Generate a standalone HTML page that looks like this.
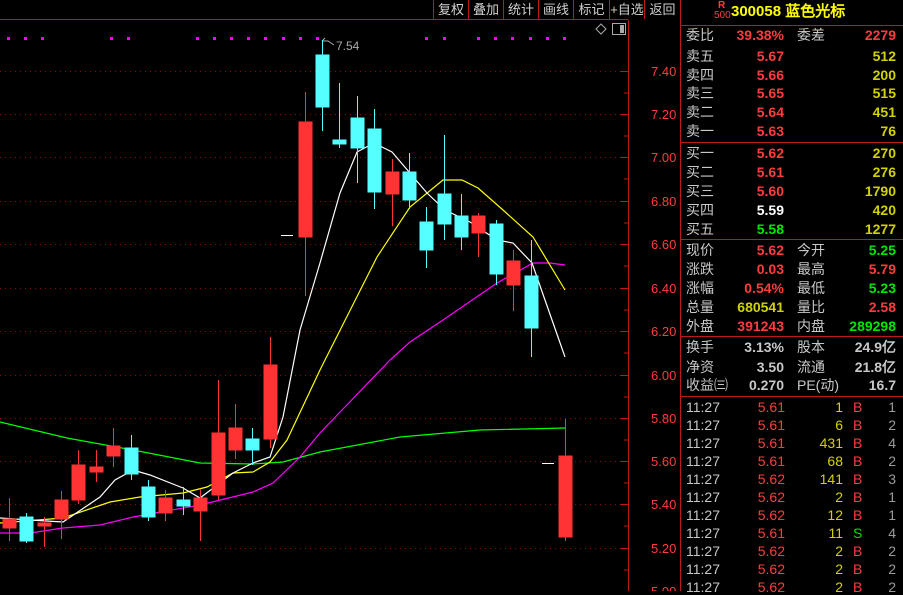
<!DOCTYPE html>
<html><head><meta charset="utf-8"><style>
body{margin:0;background:#000;width:903px;height:591px;overflow:hidden;position:relative;font-family:"Liberation Sans","WenQuanYi Zen Hei","Noto Sans CJK SC",sans-serif;}
.t{position:absolute;font-size:14px;line-height:16px;white-space:nowrap;}
.g{color:#c8c8c8}.r{color:#ff3c3c}.y{color:#d2d200}.gr{color:#00e600}.w{color:#fff}.gy{color:#9a9a9a}
.n{font-weight:bold;font-family:"Liberation Sans",sans-serif;}
.btn{position:absolute;top:1px;font-size:13px;color:#d0d0d0;line-height:17px;text-align:center;}
.ra{text-align:right}
</style></head><body>
<svg width="903" height="591" style="position:absolute;left:0;top:0">
<g stroke="#8a1010" stroke-dasharray="1,4" stroke-width="1">
<line x1="0" y1="71.5" x2="620" y2="71.5"/><line x1="0" y1="114.5" x2="620" y2="114.5"/><line x1="0" y1="157.5" x2="620" y2="157.5"/><line x1="0" y1="201.5" x2="620" y2="201.5"/><line x1="0" y1="244.5" x2="620" y2="244.5"/><line x1="0" y1="288.5" x2="620" y2="288.5"/><line x1="0" y1="331.5" x2="620" y2="331.5"/><line x1="0" y1="375.5" x2="620" y2="375.5"/><line x1="0" y1="418.5" x2="620" y2="418.5"/><line x1="0" y1="461.5" x2="620" y2="461.5"/><line x1="0" y1="504.5" x2="620" y2="504.5"/><line x1="0" y1="548.5" x2="620" y2="548.5"/>
</g>
<g stroke="#c01818" stroke-width="1">
<line x1="628.5" y1="20" x2="628.5" y2="591"/>
<line x1="680.5" y1="0" x2="680.5" y2="591"/>
<line x1="0" y1="19.5" x2="628" y2="19.5"/>
<line x1="433.5" y1="0" x2="433.5" y2="19"/><line x1="468.5" y1="0" x2="468.5" y2="19"/><line x1="503.5" y1="0" x2="503.5" y2="19"/><line x1="538.5" y1="0" x2="538.5" y2="19"/><line x1="573.5" y1="0" x2="573.5" y2="19"/><line x1="609.5" y1="0" x2="609.5" y2="19"/><line x1="644.5" y1="0" x2="644.5" y2="19"/>
<line x1="680" y1="25.5" x2="903" y2="25.5"/><line x1="680" y1="142.5" x2="903" y2="142.5"/><line x1="680" y1="239.5" x2="903" y2="239.5"/><line x1="680" y1="336.5" x2="903" y2="336.5"/><line x1="680" y1="396.5" x2="903" y2="396.5"/>
<path d="M620 71.5h8M620 114.5h8M620 157.5h8M620 201.5h8M620 244.5h8M620 288.5h8M620 331.5h8M620 375.5h8M620 418.5h8M620 461.5h8M620 504.5h8M620 548.5h8M624 93h4M624 136h4M624 179h4M624 223h4M624 266h4M624 310h4M624 353h4M624 397h4M624 440h4M624 483h4M624 526h4M624 570h4"/>
</g>
<g fill="#ff00ff">
<rect x="7" y="37" width="3" height="3"/><rect x="24" y="37" width="3" height="3"/><rect x="41" y="37" width="3" height="3"/><rect x="110" y="37" width="3" height="3"/><rect x="127" y="37" width="3" height="3"/><rect x="196" y="37" width="3" height="3"/><rect x="213" y="37" width="3" height="3"/><rect x="230" y="37" width="3" height="3"/><rect x="247" y="37" width="3" height="3"/><rect x="264" y="37" width="3" height="3"/><rect x="282" y="37" width="3" height="3"/><rect x="299" y="37" width="3" height="3"/><rect x="316" y="37" width="3" height="3"/><rect x="425" y="37" width="3" height="3"/><rect x="443" y="37" width="3" height="3"/><rect x="477" y="37" width="3" height="3"/><rect x="494" y="37" width="3" height="3"/><rect x="511" y="37" width="3" height="3"/><rect x="529" y="37" width="3" height="3"/><rect x="546" y="37" width="3" height="3"/><rect x="563" y="37" width="3" height="3"/>
</g>
<path d="M601 24l5 5-5 5-5-5z" fill="none" stroke="#aaa"/>
<rect x="612.5" y="23.5" width="13" height="11" fill="none" stroke="#aaa"/><rect x="620" y="25" width="4" height="8" fill="#aaa"/>
<path d="M322 41l3-3M322 41h6l6 4" stroke="#aaa" fill="none"/>
<g fill="none" stroke-width="1.2">
<polyline stroke="#00ff00" points="0,422 67,438 133,450 200,463 253,464 283,462 320,452 400,437 480,430 565,428"/>
<polyline stroke="#ff00ff" points="0,533 30,533 63,528 100,525 133,517 200,505 253,492 273,483 300,457 320,433 390,360 410,342 443,320 497,283 533,263 550,263 565,265"/>
<polyline stroke="#ffff00" points="0,523 63,518 110,502 140,497 183,493 207,487 233,473 253,472 270,462 287,440 320,370 325,360 377,257 410,207 443,180 462,180 478,188 503,210 533,237 565,290"/>
<polyline stroke="#ffffff" points="0,518 30,520 63,522 100,497 115,480 133,470 150,475 183,488 200,498 233,473 253,463 270,457 283,417 300,330 320,263 340,193 357,152 374,143 392,152 427,193 445,210 470,222 497,240 513,243 532,263 565,357"/>
</g>
<g stroke-width="1">
<g stroke="#ff3333" fill="#ff3333">
<line x1="9.5" y1="498" x2="9.5" y2="541"/><rect x="3" y="519" width="13" height="9"/>
<line x1="44.5" y1="517" x2="44.5" y2="547"/><rect x="38" y="523" width="13" height="3"/>
<line x1="61.5" y1="491" x2="61.5" y2="539"/><rect x="55" y="500" width="13" height="19"/>
<line x1="78.5" y1="450" x2="78.5" y2="504"/><rect x="72" y="465" width="13" height="35"/>
<line x1="96.5" y1="450" x2="96.5" y2="482"/><rect x="90" y="467" width="13" height="5"/>
<line x1="113.5" y1="428" x2="113.5" y2="467"/><rect x="107" y="446" width="13" height="10"/>
<line x1="165.5" y1="490" x2="165.5" y2="521"/><rect x="159" y="498" width="13" height="15"/>
<line x1="200.5" y1="489" x2="200.5" y2="541"/><rect x="194" y="498" width="13" height="13"/>
<line x1="218.5" y1="380" x2="218.5" y2="500"/><rect x="212" y="433" width="13" height="62"/>
<line x1="235.5" y1="404" x2="235.5" y2="459"/><rect x="229" y="428" width="13" height="22"/>
<line x1="270.5" y1="337" x2="270.5" y2="448"/><rect x="264" y="365" width="13" height="74"/>
<line x1="305.5" y1="92" x2="305.5" y2="296"/><rect x="299" y="122" width="13" height="115"/>
<line x1="392.5" y1="159" x2="392.5" y2="226"/><rect x="386" y="172" width="13" height="22"/>
<line x1="478.5" y1="213" x2="478.5" y2="257"/><rect x="472" y="216" width="13" height="17"/>
<line x1="513.5" y1="250" x2="513.5" y2="311"/><rect x="507" y="261" width="13" height="24"/>
<line x1="565.5" y1="419" x2="565.5" y2="541"/><rect x="559" y="456" width="13" height="81"/>
</g>
<g stroke="#54ffff" fill="#54ffff">
<line x1="26.5" y1="513" x2="26.5" y2="543"/><rect x="20" y="517" width="13" height="24"/>
<line x1="131.5" y1="435" x2="131.5" y2="480"/><rect x="125" y="448" width="13" height="26"/>
<line x1="148.5" y1="480" x2="148.5" y2="521"/><rect x="142" y="487" width="13" height="30"/>
<line x1="183.5" y1="487" x2="183.5" y2="515"/><rect x="177" y="500" width="13" height="6"/>
<line x1="252.5" y1="428" x2="252.5" y2="465"/><rect x="246" y="439" width="13" height="11"/>
<line x1="322.5" y1="40" x2="322.5" y2="131"/><rect x="316" y="55" width="13" height="52"/>
<line x1="339.5" y1="83" x2="339.5" y2="148"/><rect x="333" y="140" width="13" height="4"/>
<line x1="357.5" y1="96" x2="357.5" y2="183"/><rect x="351" y="118" width="13" height="30"/>
<line x1="374.5" y1="109" x2="374.5" y2="209"/><rect x="368" y="129" width="13" height="63"/>
<line x1="409.5" y1="153" x2="409.5" y2="209"/><rect x="403" y="172" width="13" height="28"/>
<line x1="426.5" y1="207" x2="426.5" y2="268"/><rect x="420" y="222" width="13" height="28"/>
<line x1="444.5" y1="135" x2="444.5" y2="240"/><rect x="438" y="194" width="13" height="30"/>
<line x1="461.5" y1="194" x2="461.5" y2="250"/><rect x="455" y="216" width="13" height="21"/>
<line x1="496.5" y1="220" x2="496.5" y2="285"/><rect x="490" y="224" width="13" height="50"/>
<line x1="531.5" y1="240" x2="531.5" y2="357"/><rect x="525" y="276" width="13" height="52"/>
</g>
<g stroke="#fff"><line x1="281" y1="235.5" x2="293" y2="235.5"/><line x1="542" y1="463.5" x2="554" y2="463.5"/></g>
</g>
<g fill="#ff3c3c" font-size="13" font-family="Liberation Sans,sans-serif">
<text x="651" y="76">7.40</text><text x="651" y="119">7.20</text><text x="651" y="162">7.00</text><text x="651" y="206">6.80</text><text x="651" y="249">6.60</text><text x="651" y="293">6.40</text><text x="651" y="336">6.20</text><text x="651" y="380">6.00</text><text x="651" y="423">5.80</text><text x="651" y="466">5.60</text><text x="651" y="509">5.40</text><text x="651" y="553">5.20</text><text x="651" y="596">5.00</text>
</g>
<text x="336" y="50" fill="#aaa" font-size="12" font-family="Liberation Sans,sans-serif">7.54</text>
</svg>
<div class="btn" style="left:434px;width:34px">复权</div><div class="btn" style="left:469px;width:34px">叠加</div><div class="btn" style="left:504px;width:34px">统计</div><div class="btn" style="left:539px;width:34px">画线</div><div class="btn" style="left:574px;width:35px">标记</div><div class="btn" style="left:610px;width:34px">+自选</div><div class="btn" style="left:645px;width:35px">返回</div>
<div class="t r n" style="left:718px;top:1px;font-size:10px;line-height:10px">R</div>
<div class="t r" style="left:714px;top:10px;font-size:10px;line-height:11px">500</div>
<div class="t y n" style="left:731px;top:3px;font-size:15px;line-height:18px;color:#ffff00">300058 蓝色光标</div>
<div id="rp"></div>
<script>
var rows=[
[35,"委比","39.38%","r","委差","2279","r"],
[56,"卖五","5.67","r","","512","y"],[75,"卖四","5.66","r","","200","y"],[93,"卖三","5.65","r","","515","y"],[112,"卖二","5.64","r","","451","y"],[131,"卖一","5.63","r","","76","y"],
[153,"买一","5.62","r","","270","y"],[172,"买二","5.61","r","","276","y"],[191,"买三","5.60","r","","1790","y"],[210,"买四","5.59","w","","420","y"],[229,"买五","5.58","gr","","1277","y"],
[250,"现价","5.62","r","今开","5.25","gr"],[269,"涨跌","0.03","r","最高","5.79","r"],[288,"涨幅","0.54%","r","最低","5.23","gr"],[307,"总量","680541","y","量比","2.58","r"],[326,"外盘","391243","r","内盘","289298","gr"],
[347,"换手","3.13%","g","股本","24.9亿","g"],[367,"净资","3.50","g","流通","21.8亿","g"],[385,"收益㈢","0.270","g","PE(动)","16.7","g"]];
var h="";
rows.forEach(function(r){var t=r[0]-8;
h+='<div class="t g" style="left:686px;top:'+t+'px">'+r[1]+'</div>';
h+='<div class="t n ra '+r[3]+'" style="left:700px;width:84px;top:'+t+'px">'+r[2]+'</div>';
if(r[4])h+='<div class="t g" style="left:797px;top:'+t+'px">'+r[4]+'</div>';
h+='<div class="t n ra '+r[6]+'" style="left:810px;width:86px;top:'+t+'px">'+r[5]+'</div>';});
var tr=[["5.61","1","B","1"],["5.61","6","B","2"],["5.61","431","B","4"],["5.61","68","B","2"],["5.62","141","B","3"],["5.62","2","B","1"],["5.62","12","B","1"],["5.61","11","S","4"],["5.62","2","B","2"],["5.62","2","B","2"],["5.62","2","B","2"]];
tr.forEach(function(r,i){var t=407+i*18-8;
h+='<div class="t g n" style="left:686px;top:'+t+'px;font-weight:normal">11:27</div>';
h+='<div class="t r n ra" style="left:720px;width:65px;top:'+t+'px;font-weight:normal">'+r[0]+'</div>';
h+='<div class="t y n ra" style="left:800px;width:43px;top:'+t+'px;font-weight:normal">'+r[1]+'</div>';
h+='<div class="t '+(r[2]=="S"?"gr":"r")+'" style="left:853px;top:'+t+'px">'+r[2]+'</div>';
h+='<div class="t gy ra" style="left:870px;width:26px;top:'+t+'px">'+r[3]+'</div>';});
document.getElementById("rp").innerHTML=h;
</script>
</body></html>
